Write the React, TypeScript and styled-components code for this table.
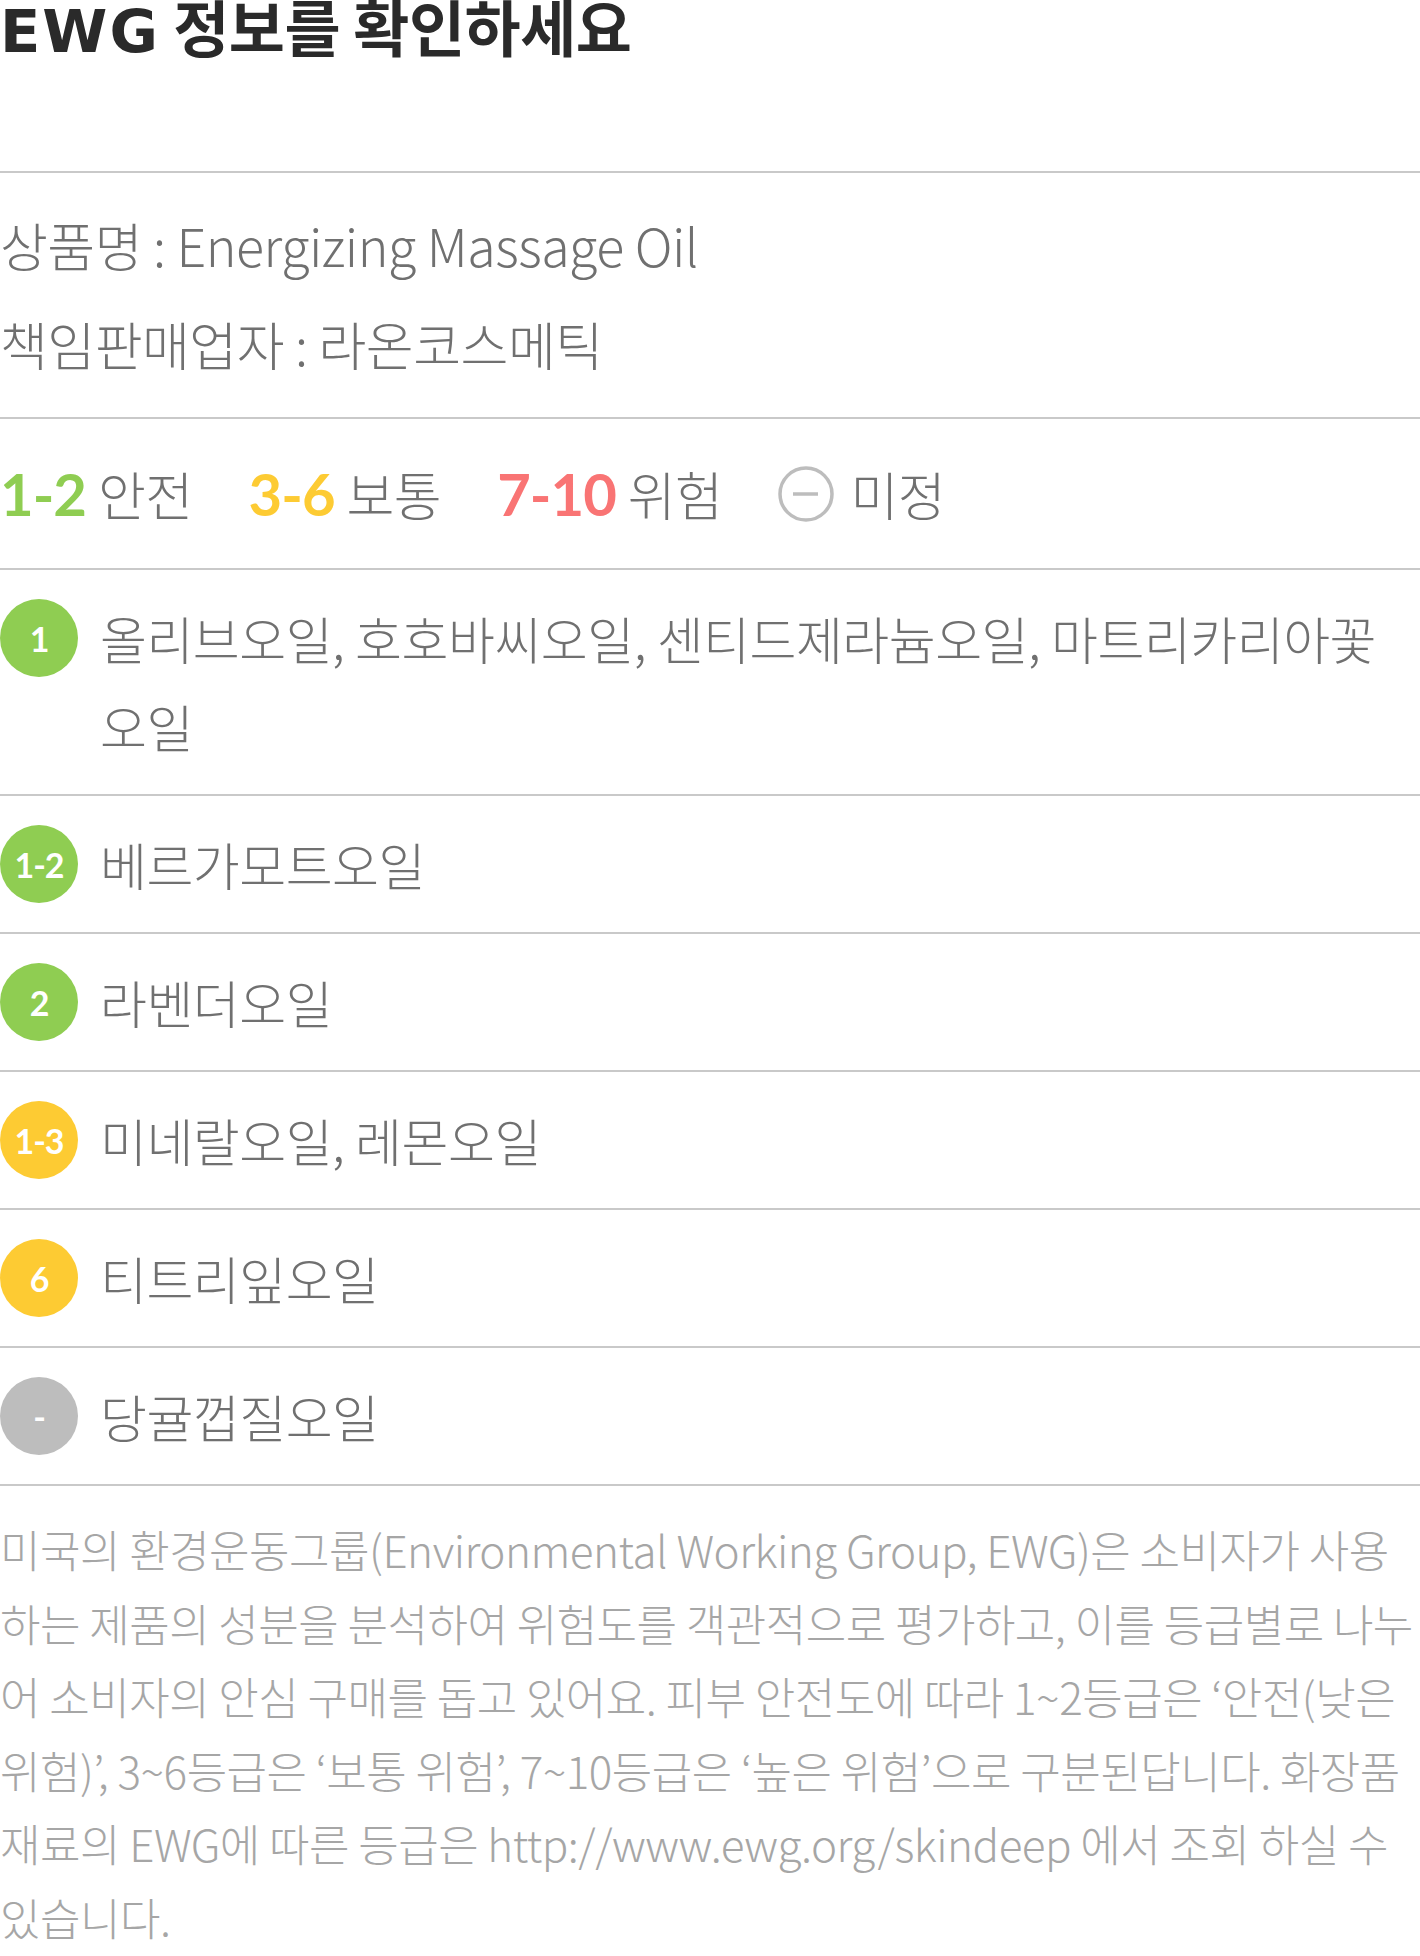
import React from "react";
import styled, { createGlobalStyle } from "styled-components";

const GlobalStyle = createGlobalStyle`
  html, body {
    margin: 0;
    padding: 0;
    background: #ffffff;
  }
  body {
    font-family: "Noto Sans CJK KR", "Noto Sans", sans-serif;
  }
`;

const Page = styled.div`
  width: 1420px;
  font-family: "Noto Sans CJK KR", "Noto Sans", sans-serif;
`;

const Title = styled.h2`
  margin: 0;
  padding: 0 0 119px;
  font-size: 61px;
  line-height: 52px;
  font-weight: 700;
  color: #2a2a2a;
  letter-spacing: -0.5px;
  border-bottom: 2px solid #c9c9c9;
`;

const TitleLatin = styled.span`
  font-family: "DejaVu Sans", "Noto Sans", sans-serif;
  font-size: 59px;
  line-height: 0;
  letter-spacing: 2px;
`;

const InfoSection = styled.div`
  padding: 22px 0 24px;
  border-bottom: 2px solid #c9c9c9;
`;

const InfoLine = styled.p`
  margin: 0;
  font-size: 52px;
  line-height: 99px;
  font-weight: 300;
  color: #707070;
  letter-spacing: -0.5px;
`;

const Legend = styled.div`
  height: 149px;
  display: flex;
  align-items: center;
  gap: 56px;
  border-bottom: 2px solid #c9c9c9;
`;

const LegendGroup = styled.div`
  display: flex;
  align-items: center;
  gap: 12px;
`;

const LegendRange = styled.span<{ $color: string }>`
  font-family: "Lato", "Noto Sans", sans-serif;
  font-weight: 700;
  font-size: 58px;
  line-height: 1;
  letter-spacing: -1px;
  color: ${(p) => p.$color};
`;

const LegendLabel = styled.span`
  font-size: 52px;
  line-height: 1;
  font-weight: 300;
  color: #707070;
  letter-spacing: -0.5px;
`;

const UnknownIcon = styled.svg`
  display: block;
  width: 56px;
  height: 56px;
  flex: none;
  margin-right: 4px;
`;

const Row = styled.div`
  display: flex;
  align-items: flex-start;
  gap: 22px;
  padding: 24px 30px 24px 0;
  border-bottom: 2px solid #c9c9c9;
`;

const Badge = styled.span<{ $bg: string }>`
  flex: none;
  width: 78px;
  height: 78px;
  margin-top: 5px;
  border-radius: 50%;
  background: ${(p) => p.$bg};
  display: flex;
  align-items: center;
  justify-content: center;
  font-family: "Lato", "Noto Sans", sans-serif;
  font-weight: 700;
  font-size: 34px;
  letter-spacing: -1px;
  color: #ffffff;
`;

const RowText = styled.div`
  font-size: 51px;
  line-height: 88px;
  font-weight: 300;
  color: #707070;
  letter-spacing: -0.5px;
`;

const Note = styled.p`
  margin: 0;
  padding-top: 27px;
  font-size: 44px;
  line-height: 73.6px;
  font-weight: 300;
  color: #a6a6a6;
  letter-spacing: -0.5px;
  word-break: break-all;
`;

const GREEN = "#8fcd52";
const YELLOW = "#fdcb33";
const RED = "#f97474";
const GRAY = "#bdbdbd";

const ingredients: { grade: string; color: string; name: string }[] = [
  {
    grade: "1",
    color: GREEN,
    name: "올리브오일, 호호바씨오일, 센티드제라늄오일, 마트리카리아꽃오일",
  },
  { grade: "1-2", color: GREEN, name: "베르가모트오일" },
  { grade: "2", color: GREEN, name: "라벤더오일" },
  { grade: "1-3", color: YELLOW, name: "미네랄오일, 레몬오일" },
  { grade: "6", color: YELLOW, name: "티트리잎오일" },
  { grade: "-", color: GRAY, name: "당귤껍질오일" },
];

export default function App() {
  return (
    <Page>
      <GlobalStyle />
      <Title>
        <TitleLatin>EWG</TitleLatin> 정보를 확인하세요
      </Title>
      <InfoSection>
        <InfoLine>상품명 : Energizing Massage Oil</InfoLine>
        <InfoLine>책임판매업자 : 라온코스메틱</InfoLine>
      </InfoSection>
      <Legend>
        <LegendGroup>
          <LegendRange $color={GREEN}>1-2</LegendRange>
          <LegendLabel>안전</LegendLabel>
        </LegendGroup>
        <LegendGroup>
          <LegendRange $color={YELLOW}>3-6</LegendRange>
          <LegendLabel>보통</LegendLabel>
        </LegendGroup>
        <LegendGroup>
          <LegendRange $color={RED}>7-10</LegendRange>
          <LegendLabel>위험</LegendLabel>
        </LegendGroup>
        <LegendGroup>
          <UnknownIcon viewBox="0 0 56 56">
            <circle cx="28" cy="28" r="26" fill="none" stroke={GRAY} strokeWidth="3.5" />
            <line x1="15" y1="28" x2="40" y2="28" stroke={GRAY} strokeWidth="3.5" />
          </UnknownIcon>
          <LegendLabel>미정</LegendLabel>
        </LegendGroup>
      </Legend>
      {ingredients.map((item) => (
        <Row key={item.grade}>
          <Badge $bg={item.color}>{item.grade}</Badge>
          <RowText>{item.name}</RowText>
        </Row>
      ))}
      <Note>
        미국의 환경운동그룹(Environmental Working Group, EWG)은 소비자가 사용하는 제품의 성분을
        분석하여 위험도를 객관적으로 평가하고, 이를 등급별로 나누어 소비자의 안심 구매를 돕고
        있어요. 피부 안전도에 따라 1~2등급은 ‘안전(낮은 위험)’, 3~6등급은 ‘보통 위험’,
        7~10등급은 ‘높은 위험’으로 구분된답니다. 화장품 재료의 EWG에 따른 등급은
        http://www.ewg.org/skindeep 에서 조회 하실 수 있습니다.
      </Note>
    </Page>
  );
}
